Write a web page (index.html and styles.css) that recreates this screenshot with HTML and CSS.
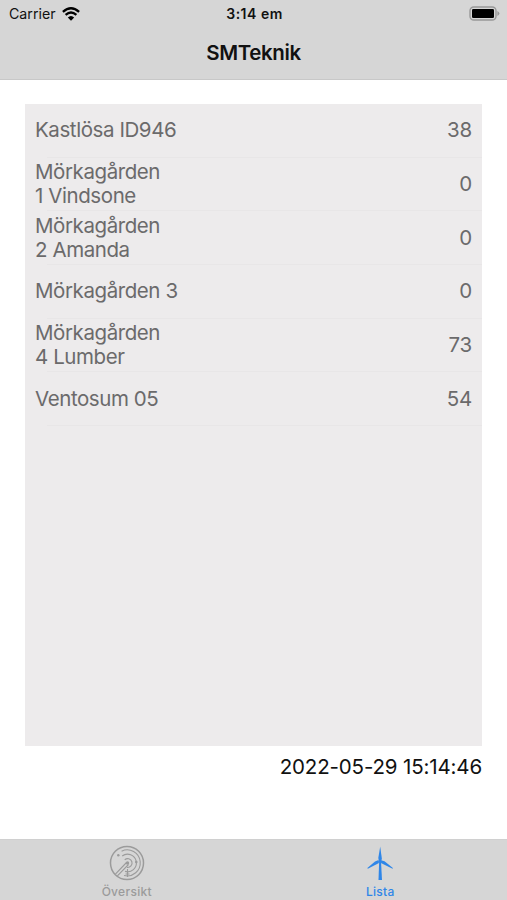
FILE: index.html
```html
<!DOCTYPE html>
<html lang="sv">
<head>
    <meta charset="UTF-8">
    <meta name="viewport" content="width=device-width, initial-scale=1.0">
    <title>SMTeknik</title>
    <link rel="stylesheet" href="styles.css">
</head>
<body>
    <header class="header">
        <div class="status">
            <div class="carrier">
                <span>Carrier</span>
                <svg class="wifi" viewBox="0 0 18 14">
                    <path d="M0.9 4.9Q9 -2.3 17.1 4.9M3.6 7.9Q9 3.2 14.4 7.9" fill="none" stroke="#000" stroke-width="2.3"/>
                    <path d="M5.8 10.4Q9 7.4 12.2 10.4L9 13.7Z"/>
                </svg>
            </div>
            <div class="clock">3:14 em</div>
            <svg class="battery" viewBox="0 0 31 15">
                <rect x="1" y="1" width="26" height="13" rx="3.8" fill="none" stroke="#989898" stroke-width="1.4"/>
                <rect x="3" y="3" width="22" height="9" rx="1.3"/>
                <path d="M28.4 5Q32.4 7.5 28.4 10Z" fill="#989898"/>
            </svg>
        </div>
        <h1 class="title">SMTeknik</h1>
    </header>

    <main class="content">
        <ul class="list">
            <li class="row"><span class="name">Kastlösa ID946</span><span class="value">38</span></li>
            <li class="row"><span class="name">Mörkagården<br>1 Vindsone</span><span class="value">0</span></li>
            <li class="row"><span class="name">Mörkagården<br>2 Amanda</span><span class="value">0</span></li>
            <li class="row"><span class="name">Mörkagården 3</span><span class="value">0</span></li>
            <li class="row"><span class="name">Mörkagården<br>4 Lumber</span><span class="value">73</span></li>
            <li class="row"><span class="name">Ventosum 05</span><span class="value">54</span></li>
        </ul>
        <p class="updated">2022-05-29 15:14:46</p>
    </main>

    <nav class="tabs">
        <a class="tab">
            <svg class="icon" viewBox="0 0 36 36" fill="none" stroke="currentColor">
                <circle cx="18" cy="18" r="16.5" stroke-width="1.5"/>
                <path d="M6.4 29.2L17.5 17.5M8.4 30.8L19.5 19.5" stroke-width="1.1"/>
                <path d="M12.6 6.2A13 13 0 1 1 15 30.5M13.2 11A8.8 8.8 0 1 1 16 26.4M15.7 14.8A4.4 4.4 0 1 1 18 22.4" stroke-width="1.1"/>
                <path d="M18.5 24v8M16.5 29h4" stroke-width="1.1"/>
                <circle cx="18.5" cy="18" r="1.7" fill="currentColor" stroke="none"/>
                <circle cx="9.3" cy="10.2" r="1.2" fill="currentColor" stroke="none"/>
                <circle cx="27.3" cy="17" r="1.3" fill="currentColor" stroke="none"/>
            </svg>
            <span>Översikt</span>
        </a>
        <a class="tab active">
            <svg class="icon" viewBox="0 0 36 36" fill="currentColor">
                <path d="M18.2 1.5L19.9 14L18.9 16.1H16.9L16.3 13Z"/>
                <path d="M16 15.3L17 18.1L5.8 23.8L5.4 23L13 16.5Z"/>
                <path d="M19.9 15.6L22.5 16.3L30.9 23L30.6 23.8L18.9 18.1Z"/>
                <circle cx="18.1" cy="16.3" r="1.9"/>
                <path d="M17.1 18H19.1L20 35H16.5Z"/>
            </svg>
            <span>Lista</span>
        </a>
    </nav>
</body>
</html>
```
FILE: styles.css
```css
* {
    margin: 0;
    padding: 0;
    box-sizing: border-box;
}

body {
    display: flex;
    flex-direction: column;
    height: 900px;
    background-color: #fff;
    color: #111;
    font-family: Inter, "Liberation Sans", sans-serif;
}

.header {
    height: 80px;
    background-color: #d6d6d6;
    border-bottom: 1px solid #c8c8c8;
}

.status {
    display: grid;
    grid-template-columns: 1fr auto 1fr;
    align-items: center;
    height: 27px;
    padding: 0 7px 0 9px;
}

.carrier {
    display: flex;
    align-items: center;
    gap: 6px;
    font-size: 14.2px;
}

.wifi {
    width: 18px;
    height: 14px;
}

.clock {
    font-size: 14px;
    font-weight: 600;
    letter-spacing: 0.5px;
}

.battery {
    justify-self: end;
    width: 31px;
    height: 15px;
}

.title {
    font-size: 20.5px;
    font-weight: 600;
    letter-spacing: -0.4px;
    line-height: 51px;
    text-align: center;
}

.content {
    flex: 1;
    padding: 24px 25px 0;
}

.list {
    height: 642px;
    background-color: #edebec;
    list-style: none;
}

.row {
    position: relative;
    display: flex;
    align-items: center;
    justify-content: space-between;
    height: 53.7px;
    padding: 0 10px 0.6px;
    color: #6b6a6b;
    font-size: 20.5px;
    line-height: 24.4px;
}

.name {
    letter-spacing: -0.42px;
}

.value {
    letter-spacing: -0.2px;
}

/* separator starts at the text, not at the edge */
.row::after {
    content: "";
    position: absolute;
    left: 22px;
    right: 0;
    bottom: 0;
    height: 1px;
    background-color: #e8e6e7;
}

.updated {
    font-size: 20.5px;
    letter-spacing: -0.15px;
    line-height: 42px;
    text-align: right;
}

.tabs {
    display: flex;
    height: 61px;
    background-color: #d6d6d6;
    border-top: 1px solid #d0d0d0;
}

.tab {
    flex: 1;
    display: flex;
    flex-direction: column;
    align-items: center;
    padding-top: 5px;
    color: #9b9b9b;
    font-size: 12px;
    font-weight: 500;
    letter-spacing: 0.3px;
    line-height: 22px;
}

.active {
    color: #2f86e8;
}

.icon {
    flex-shrink: 0;
    width: 36px;
    height: 36px;
}
```
